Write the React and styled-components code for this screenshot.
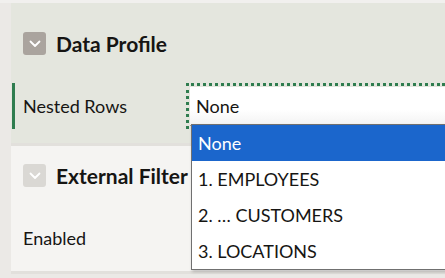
import React from 'react'
import styled, { createGlobalStyle } from 'styled-components'

const GlobalStyle = createGlobalStyle`
  html, body {
    margin: 0;
    padding: 0;
    background: #ebe9e6;
    overflow: hidden;
  }
  body {
    font-family: Lato, "Noto Sans", sans-serif;
    color: #161513;
  }
`

const Page = styled.div`
  position: relative;
  width: 445px;
  height: 278px;
  padding: 3px 0 0 11px;
  box-sizing: border-box;
  background: linear-gradient(#f1f0ee 0 3px, #ebe9e6 3px);
`

const Section = styled.div`
  background: ${p => p.$active ? '#e4e6de' : '#f5f4f2'};
  height: ${p => p.$h}px;
  border-bottom: 3px solid #e2e0dc;
  display: flex;
  flex-direction: column;
`

const Header = styled.div`
  display: flex;
  align-items: center;
  gap: 10px;
  padding: ${p => p.$pad};
  padding-left: 12px;
`

const Toggle = styled.span`
  width: 23px;
  height: 23px;
  border-radius: 3px;
  background: ${p => p.$active ? '#aaa49e' : '#dad8d4'};
  display: flex;
  align-items: center;
  justify-content: center;
  flex-shrink: 0;
`

const Title = styled.h2`
  margin: 0;
  font-size: 21px;
  font-weight: 700;
  white-space: nowrap;
`

const Row = styled.div`
  display: flex;
  align-items: center;
  height: 46px;
  margin-top: ${p => p.$mt}px;
  border-left: 3px solid ${p => p.$focus ? '#2f7d4f' : 'transparent'};
  margin-left: 1px;
`

const Label = styled.label`
  width: 163px;
  padding-left: 8px;
  font-size: 18px;
`

const SelectBox = styled.div`
  flex: 1;
  height: 100%;
  border: 3px dotted #2f7d4f;
  border-right: none;
  padding: 1px 0 0 1px;
  box-sizing: border-box;
  display: flex;
`

const SelectInner = styled.div`
  flex: 1;
  background: linear-gradient(#ffffff 60%, #f3f3f3);
  display: flex;
  align-items: center;
  padding-left: 6px;
  font-size: 18px;
  border-bottom: 1px solid #9a9a9a;
`

const Menu = styled.ul`
  position: absolute;
  left: 191px;
  top: 124px;
  width: 260px;
  margin: 0;
  padding: 0;
  list-style: none;
  background: #fff;
  border: 1px solid #707070;
  box-shadow: 1px 2px 3px rgba(0, 0, 0, 0.2);
`

const Option = styled.li`
  height: 36px;
  display: flex;
  align-items: center;
  padding-left: 6px;
  font-size: 18px;
  background: ${p => p.$selected ? '#1b66cc' : '#fff'};
  color: ${p => p.$selected ? '#fff' : '#161513'};
`

const Chevron = () => (
  <svg width="12" height="8" viewBox="0 0 12 8">
    <path d="M1.5 1.5 L6 6 L10.5 1.5" fill="none" stroke="#fff" strokeWidth="1.8" strokeLinecap="round" strokeLinejoin="round" />
  </svg>
)

const options = ['None', '1. EMPLOYEES', '2. … CUSTOMERS', '3. LOCATIONS']

export default function App() {
  return (
    <Page>
      <GlobalStyle />
      <Section $active $h={140}>
        <Header $pad="28px 0 0">
          <Toggle $active><Chevron /></Toggle>
          <Title>Data Profile</Title>
        </Header>
        <Row $focus $mt={27}>
          <Label>Nested Rows</Label>
          <SelectBox>
            <SelectInner>None</SelectInner>
          </SelectBox>
        </Row>
      </Section>
      <Section $h={125}>
        <Header $pad="17px 0 0">
          <Toggle><Chevron /></Toggle>
          <Title>External Filter</Title>
        </Header>
        <Row $mt={27}>
          <Label>Enabled</Label>
        </Row>
      </Section>
      <Menu>
        {options.map((o, i) => (
          <Option key={o} $selected={i === 0}>{o}</Option>
        ))}
      </Menu>
    </Page>
  )
}
